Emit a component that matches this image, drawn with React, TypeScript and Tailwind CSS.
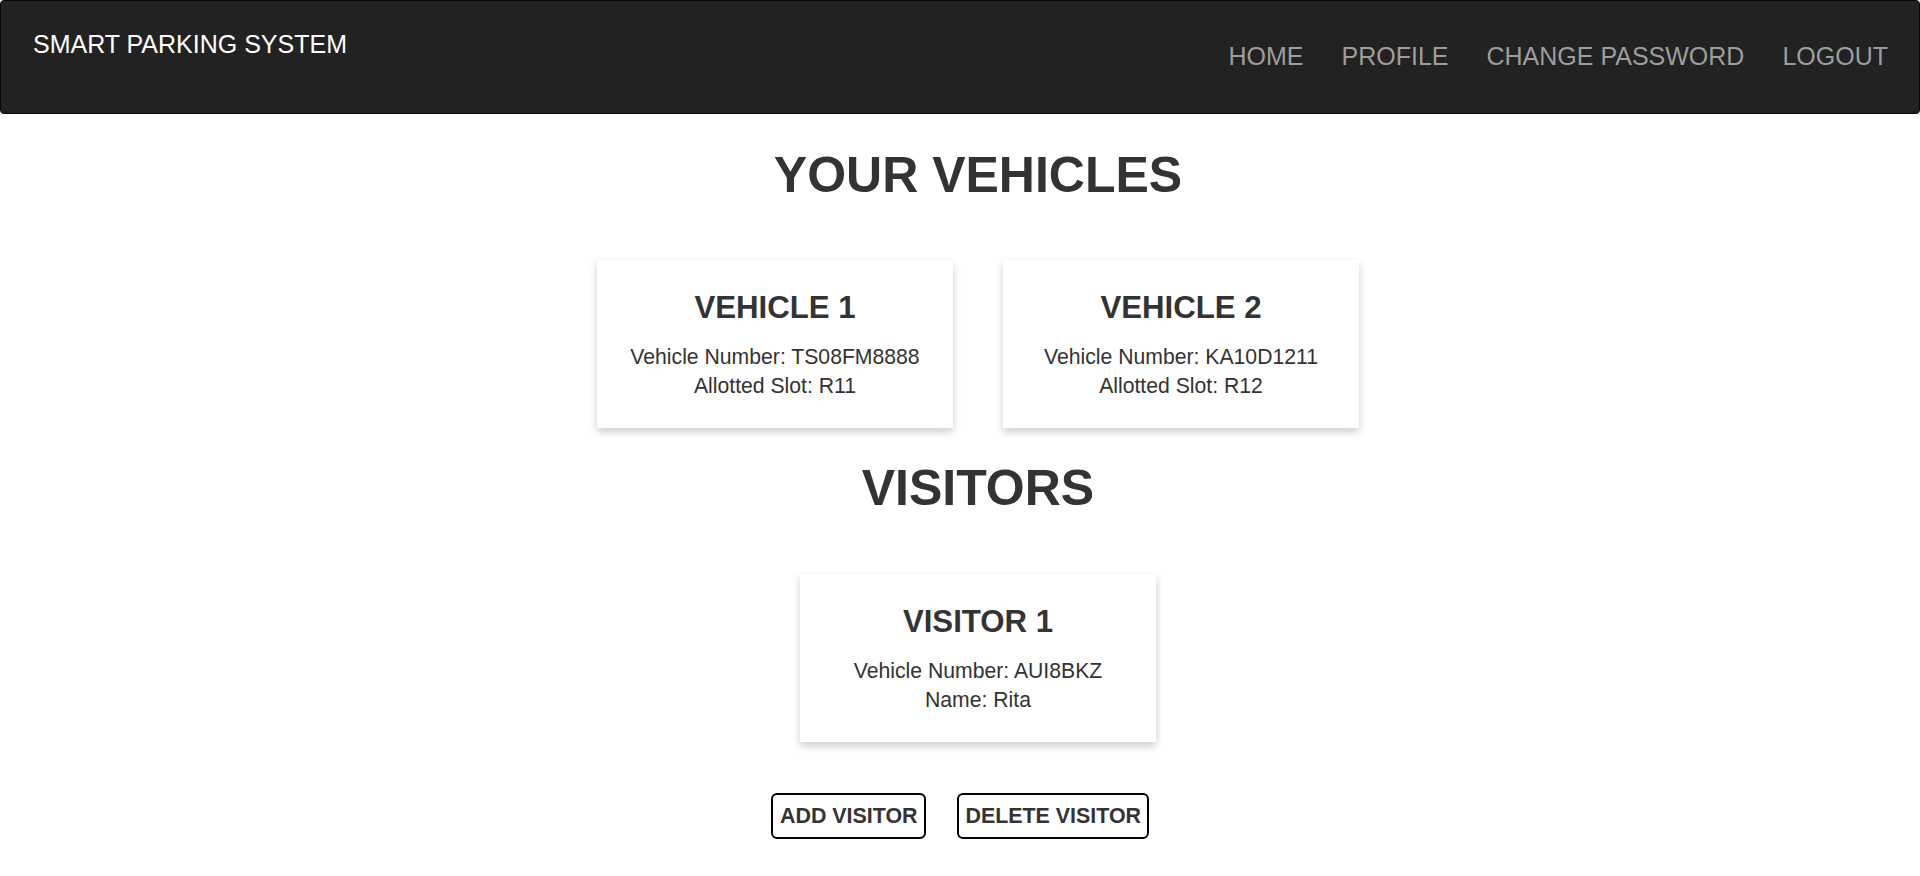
import React from "react";

const font = { fontFamily: '"Liberation Sans", Arial, Helvetica, sans-serif' };

function Card({ title, lines }: { title: string; lines: string[] }) {
  return (
    <div className="w-[356px] h-[168px] bg-white shadow-[0_4px_8px_0_rgba(0,0,0,0.2)] pt-[30px] flex flex-col items-center text-[#333]">
      <h2 className="text-[31.2px] leading-[36px] font-bold">{title}</h2>
      <div className="mt-[16px] text-[21.2px] leading-[29.6px] text-center">
        {lines.map((l) => (
          <p key={l}>{l}</p>
        ))}
      </div>
    </div>
  );
}

export default function App() {
  return (
    <div style={font} className="min-h-[876px] bg-white">
      <nav className="h-[114px] bg-[#222] border border-[#080808] rounded-[4px] flex justify-between">
        <div className="pl-[32px] pt-[28px] text-white text-[25px] leading-[30px]">SMART PARKING SYSTEM</div>
        <ul className="flex gap-[38px] pr-[31px] pt-[40px] text-[#9d9d9d] text-[25px] leading-[30px]">
          <li>HOME</li>
          <li>PROFILE</li>
          <li>CHANGE PASSWORD</li>
          <li>LOGOUT</li>
        </ul>
      </nav>
      <div className="pl-[36px] flex flex-col items-center">
        <h1 className="mt-[33.6px] text-[50px] leading-[54.1px] font-bold text-[#333]">YOUR VEHICLES</h1>
        <div className="mt-[58px] flex gap-[50px]">
          <Card title="VEHICLE 1" lines={["Vehicle Number: TS08FM8888", "Allotted Slot: R11"]} />
          <Card title="VEHICLE 2" lines={["Vehicle Number: KA10D1211", "Allotted Slot: R12"]} />
        </div>
        <h1 className="mt-[33px] text-[50px] leading-[54.1px] font-bold text-[#333]">VISITORS</h1>
        <div className="mt-[59px] flex">
          <Card title="VISITOR 1" lines={["Vehicle Number: AUI8BKZ", "Name: Rita"]} />
        </div>
      </div>
      <div className="mt-[51px] flex justify-center gap-[31px]">
        <button className="h-[46px] px-[7px] border-2 border-black rounded-[6px] bg-white text-[21.4px] font-bold text-[#333]">
          ADD VISITOR
        </button>
        <button className="h-[46px] px-[6px] border-2 border-black rounded-[6px] bg-white text-[21.4px] font-bold text-[#333]">
          DELETE VISITOR
        </button>
      </div>
    </div>
  );
}
